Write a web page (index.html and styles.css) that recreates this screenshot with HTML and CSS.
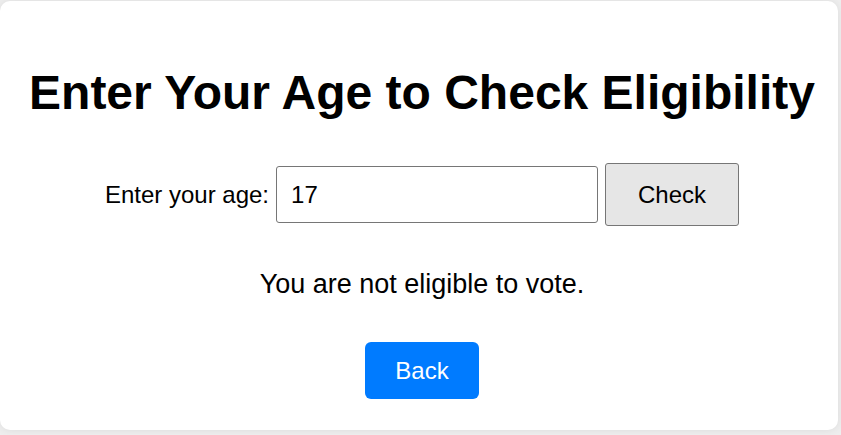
FILE: index.html
```html
<!DOCTYPE html>
<html>
<head>
<meta charset="utf-8">
<link rel="stylesheet" href="styles.css">
</head>
<body>
<div class="card">
  <h1 class="title">Enter Your Age to Check Eligibility</h1>
  <form class="age-form">
    <label class="age-label" for="age">Enter your age:</label>
    <input class="age-input" id="age" type="text" value="17">
    <button class="check-btn" type="button">Check</button>
  </form>
  <p class="result">You are not eligible to vote.</p>
  <button class="back-btn" type="button">Back</button>
</div>
</body>
</html>
```
FILE: styles.css
```css
html, body {
  margin: 0;
  padding: 0;
}
body {
  background: #eeeeee;
  font-family: "Liberation Sans", Arial, sans-serif;
  color: #000;
  padding: 1px 3px 5px 0;
}
.card {
  background: #fff;
  border-radius: 10px;
  box-shadow: 0 0 8px rgba(0,0,0,0.08);
  height: 429px;
  box-sizing: border-box;
  display: flex;
  flex-direction: column;
  align-items: center;
  padding: 64px 0 0 6px;
}
.title {
  margin: 0;
  font-size: 48px;
  font-weight: bold;
  line-height: 56px;
}
.age-form {
  display: flex;
  align-items: center;
  margin-top: 42px;
}
.age-label {
  font-size: 24px;
  margin-right: 7px;
}
.age-input {
  width: 322px;
  height: 57px;
  box-sizing: border-box;
  border: 1px solid #767676;
  border-radius: 3px;
  padding: 0 14px;
  font-family: "Liberation Sans", Arial, sans-serif;
  font-size: 24px;
  color: #000;
}
.check-btn {
  margin-left: 7px;
  width: 134px;
  height: 63px;
  box-sizing: border-box;
  background: #e6e6e6;
  border: 1px solid #767676;
  border-radius: 3px;
  font-family: "Liberation Sans", Arial, sans-serif;
  font-size: 24px;
  color: #000;
}
.result {
  margin: 43px 0 0;
  font-size: 27px;
  line-height: 30px;
}
.back-btn {
  margin-top: 43px;
  width: 114px;
  height: 57px;
  background: #007bff;
  color: #fff;
  border: none;
  border-radius: 6px;
  font-family: "Liberation Sans", Arial, sans-serif;
  font-size: 24px;
}
```
